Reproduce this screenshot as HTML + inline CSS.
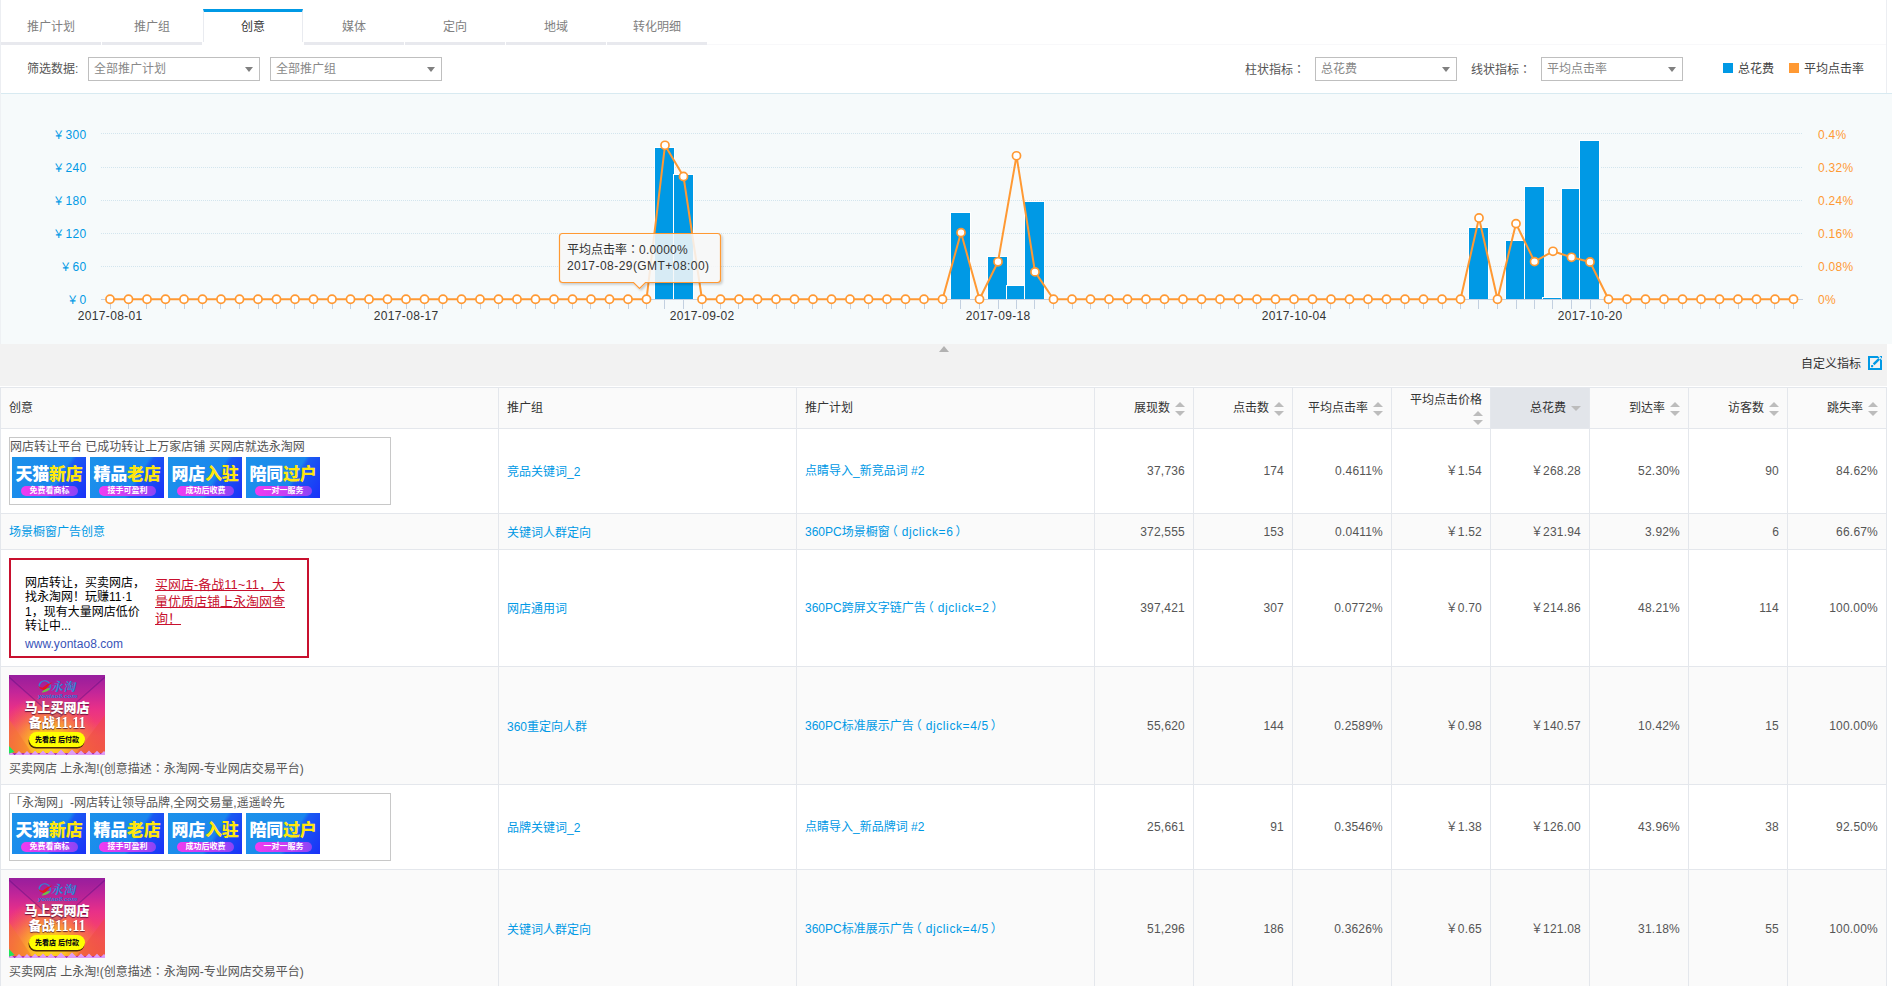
<!DOCTYPE html>
<html lang="zh-CN"><head><meta charset="utf-8"><title>创意报表</title>
<style>
*{box-sizing:border-box;margin:0;padding:0}
html,body{width:1892px;height:986px;overflow:hidden;background:#fff}
body{position:relative;font:12px/16px "Liberation Sans","Noto Sans CJK SC",sans-serif;color:#333}
.abs{position:absolute}
.t{position:absolute;white-space:nowrap;line-height:16px;height:16px}
a{color:#0099e5;text-decoration:none}
/* tabs */
.tab{position:absolute;top:9px;width:100px;height:36px;border-bottom:3px solid #e8e9ee;text-align:center;color:#808080;line-height:16px;padding-top:10px}
.tab.on{border-bottom:0;border-top:3px solid #0099e5;border-left:1px solid #e9ebf0;border-right:1px solid #e9ebf0;color:#333;padding-top:7px;height:33px}
.jp{font-family:"Noto Sans CJK JP",sans-serif}
.sel{position:absolute;top:57px;height:24px;border:1px solid #bfbfbf;background:#fff;color:#888;line-height:16px;padding:3px 0 0 5px}
.sel i{position:absolute;right:6px;top:9px;width:0;height:0;border-left:4px solid transparent;border-right:4px solid transparent;border-top:5px solid #808080}
</style></head><body>

<div class="abs" style="left:0;top:0;width:1px;height:94px;background:#eceef2"></div>
<div class="abs" style="left:1886px;top:0;width:1px;height:94px;background:#eceef2"></div>
<div class="abs" style="left:707px;top:44px;width:1179px;height:1px;background:#f8f8fa"></div>
<div class="tab" style="left:1px">推广计划</div>
<div class="tab" style="left:102px">推广组</div>
<div class="tab on" style="left:203px">创意</div>
<div class="tab" style="left:304px">媒体</div>
<div class="tab" style="left:405px">定向</div>
<div class="tab" style="left:506px">地域</div>
<div class="tab" style="left:607px">转化明细</div>
<div class="t" style="left:27px;top:61px;color:#555">筛选数据:</div>
<div class="sel" style="left:88px;width:172px">全部推广计划<i></i></div>
<div class="sel" style="left:270px;width:172px">全部推广组<i></i></div>
<div class="t" style="left:1245px;top:61px;color:#555">柱状指标<span class="jp" lang="ja">：</span></div>
<div class="sel" style="left:1315px;width:142px">总花费<i></i></div>
<div class="t" style="left:1471px;top:61px;color:#555">线状指标<span class="jp" lang="ja">：</span></div>
<div class="sel" style="left:1541px;width:142px">平均点击率<i></i></div>
<div class="abs" style="left:1723px;top:63px;width:10px;height:10px;background:#0099e5"></div>
<div class="t" style="left:1738px;top:61px;color:#444">总花费</div>
<div class="abs" style="left:1789px;top:63px;width:10px;height:10px;background:#ff9933"></div>
<div class="t" style="left:1804px;top:61px;color:#444">平均点击率</div>
<svg class="abs" style="left:0;top:93px" width="1892" height="251" viewBox="0 0 1892 251" font-family='"Liberation Sans","Noto Sans CJK SC",sans-serif' font-size="12">
<rect x="0" y="0" width="1892" height="251" fill="#f6fafb"/>
<rect x="0" y="0" width="1892" height="1" fill="#d8eaf1"/>
<rect x="0" y="0" width="1" height="251" fill="#eef1f4"/>
<line x1="101" x2="1803" y1="40.5" y2="40.5" stroke="#d3e5ee" stroke-width="1" stroke-dasharray="1,1" shape-rendering="crispEdges"/>
<line x1="101" x2="1803" y1="74.5" y2="74.5" stroke="#d3e5ee" stroke-width="1" stroke-dasharray="1,1" shape-rendering="crispEdges"/>
<line x1="101" x2="1803" y1="107.5" y2="107.5" stroke="#d3e5ee" stroke-width="1" stroke-dasharray="1,1" shape-rendering="crispEdges"/>
<line x1="101" x2="1803" y1="140.5" y2="140.5" stroke="#d3e5ee" stroke-width="1" stroke-dasharray="1,1" shape-rendering="crispEdges"/>
<line x1="101" x2="1803" y1="173.5" y2="173.5" stroke="#d3e5ee" stroke-width="1" stroke-dasharray="1,1" shape-rendering="crispEdges"/>
<rect x="101" y="206" width="1702" height="1" fill="#c3d0e0"/>
<path d="M110.5 206v10M128.5 206v10M146.5 206v10M165.5 206v10M184.5 206v10M202.5 206v10M220.5 206v10M239.5 206v10M258.5 206v10M276.5 206v10M294.5 206v10M313.5 206v10M332.5 206v10M350.5 206v10M368.5 206v10M387.5 206v10M406.5 206v10M424.5 206v10M442.5 206v10M461.5 206v10M480.5 206v10M498.5 206v10M516.5 206v10M535.5 206v10M554.5 206v10M572.5 206v10M590.5 206v10M609.5 206v10M628.5 206v10M646.5 206v10M664.5 206v10M683.5 206v10M702.5 206v10M720.5 206v10M738.5 206v10M757.5 206v10M776.5 206v10M794.5 206v10M812.5 206v10M831.5 206v10M850.5 206v10M868.5 206v10M886.5 206v10M905.5 206v10M924.5 206v10M942.5 206v10M960.5 206v10M979.5 206v10M998.5 206v10M1016.5 206v10M1034.5 206v10M1053.5 206v10M1072.5 206v10M1090.5 206v10M1108.5 206v10M1127.5 206v10M1146.5 206v10M1164.5 206v10M1182.5 206v10M1201.5 206v10M1220.5 206v10M1238.5 206v10M1256.5 206v10M1275.5 206v10M1294.5 206v10M1312.5 206v10M1330.5 206v10M1349.5 206v10M1368.5 206v10M1386.5 206v10M1404.5 206v10M1423.5 206v10M1442.5 206v10M1460.5 206v10M1478.5 206v10M1497.5 206v10M1516.5 206v10M1534.5 206v10M1552.5 206v10M1571.5 206v10M1590.5 206v10M1608.5 206v10M1626.5 206v10M1645.5 206v10M1664.5 206v10M1682.5 206v10M1700.5 206v10M1719.5 206v10M1738.5 206v10M1756.5 206v10M1774.5 206v10M1793.5 206v10" stroke="#c3d0e0" stroke-width="1" fill="none" shape-rendering="crispEdges"/>
<text x="64.4" y="46.2" text-anchor="end" fill="#0099e5" font-size="11.3">￥</text><text x="86.5" y="46.2" text-anchor="end" fill="#0099e5" letter-spacing="0.35">300</text>
<text x="64.4" y="79.2" text-anchor="end" fill="#0099e5" font-size="11.3">￥</text><text x="86.5" y="79.2" text-anchor="end" fill="#0099e5" letter-spacing="0.35">240</text>
<text x="64.4" y="112.2" text-anchor="end" fill="#0099e5" font-size="11.3">￥</text><text x="86.5" y="112.2" text-anchor="end" fill="#0099e5" letter-spacing="0.35">180</text>
<text x="64.4" y="145.2" text-anchor="end" fill="#0099e5" font-size="11.3">￥</text><text x="86.5" y="145.2" text-anchor="end" fill="#0099e5" letter-spacing="0.35">120</text>
<text x="71.3" y="178.2" text-anchor="end" fill="#0099e5" font-size="11.3">￥</text><text x="86.5" y="178.2" text-anchor="end" fill="#0099e5" letter-spacing="0.35">60</text>
<text x="78.2" y="211.2" text-anchor="end" fill="#0099e5" font-size="11.3">￥</text><text x="86.5" y="211.2" text-anchor="end" fill="#0099e5" letter-spacing="0.35">0</text>
<text x="1818" y="46.2" fill="#ff9933" letter-spacing="0.3">0.4%</text>
<text x="1818" y="79.2" fill="#ff9933" letter-spacing="0.3">0.32%</text>
<text x="1818" y="112.2" fill="#ff9933" letter-spacing="0.3">0.24%</text>
<text x="1818" y="145.2" fill="#ff9933" letter-spacing="0.3">0.16%</text>
<text x="1818" y="178.2" fill="#ff9933" letter-spacing="0.3">0.08%</text>
<text x="1818" y="211.2" fill="#ff9933" letter-spacing="0.3">0%</text>
<text x="110.2" y="227" text-anchor="middle" fill="#333" letter-spacing="0.35">2017-08-01</text>
<text x="406.2" y="227" text-anchor="middle" fill="#333" letter-spacing="0.35">2017-08-17</text>
<text x="702.2" y="227" text-anchor="middle" fill="#333" letter-spacing="0.35">2017-09-02</text>
<text x="998.2" y="227" text-anchor="middle" fill="#333" letter-spacing="0.35">2017-09-18</text>
<text x="1294.2" y="227" text-anchor="middle" fill="#333" letter-spacing="0.35">2017-10-04</text>
<text x="1590.2" y="227" text-anchor="middle" fill="#333" letter-spacing="0.35">2017-10-20</text>
<rect x="654" y="54" width="21" height="152" fill="#fff" shape-rendering="crispEdges"/>
<rect x="655" y="55" width="19" height="151" fill="#0099e5" shape-rendering="crispEdges"/>
<rect x="673" y="81" width="21" height="125" fill="#fff" shape-rendering="crispEdges"/>
<rect x="674" y="82" width="19" height="124" fill="#0099e5" shape-rendering="crispEdges"/>
<rect x="950" y="119" width="21" height="87" fill="#fff" shape-rendering="crispEdges"/>
<rect x="951" y="120" width="19" height="86" fill="#0099e5" shape-rendering="crispEdges"/>
<rect x="987" y="163" width="21" height="43" fill="#fff" shape-rendering="crispEdges"/>
<rect x="988" y="164" width="19" height="42" fill="#0099e5" shape-rendering="crispEdges"/>
<rect x="1006" y="192" width="21" height="14" fill="#fff" shape-rendering="crispEdges"/>
<rect x="1007" y="193" width="19" height="13" fill="#0099e5" shape-rendering="crispEdges"/>
<rect x="1024" y="108" width="21" height="98" fill="#fff" shape-rendering="crispEdges"/>
<rect x="1025" y="109" width="19" height="97" fill="#0099e5" shape-rendering="crispEdges"/>
<rect x="1468" y="134" width="21" height="72" fill="#fff" shape-rendering="crispEdges"/>
<rect x="1469" y="135" width="19" height="71" fill="#0099e5" shape-rendering="crispEdges"/>
<rect x="1505" y="147" width="21" height="59" fill="#fff" shape-rendering="crispEdges"/>
<rect x="1506" y="148" width="19" height="58" fill="#0099e5" shape-rendering="crispEdges"/>
<rect x="1524" y="93" width="21" height="113" fill="#fff" shape-rendering="crispEdges"/>
<rect x="1525" y="94" width="19" height="112" fill="#0099e5" shape-rendering="crispEdges"/>
<rect x="1542" y="204" width="21" height="2" fill="#fff" shape-rendering="crispEdges"/>
<rect x="1543" y="205" width="19" height="1" fill="#0099e5" shape-rendering="crispEdges"/>
<rect x="1561" y="95" width="21" height="111" fill="#fff" shape-rendering="crispEdges"/>
<rect x="1562" y="96" width="19" height="110" fill="#0099e5" shape-rendering="crispEdges"/>
<rect x="1579" y="47" width="21" height="159" fill="#fff" shape-rendering="crispEdges"/>
<rect x="1580" y="48" width="19" height="158" fill="#0099e5" shape-rendering="crispEdges"/>
<polyline points="110.0,206.25 128.5,206.25 147.0,206.25 165.5,206.25 184.0,206.25 202.5,206.25 221.0,206.25 239.5,206.25 258.0,206.25 276.5,206.25 295.0,206.25 313.5,206.25 332.0,206.25 350.5,206.25 369.0,206.25 387.5,206.25 406.0,206.25 424.5,206.25 443.0,206.25 461.5,206.25 480.0,206.25 498.5,206.25 517.0,206.25 535.5,206.25 554.0,206.25 572.5,206.25 591.0,206.25 609.5,206.25 628.0,206.25 646.5,206.25 665.0,52.30 683.5,83.50 702.0,206.25 720.5,206.25 739.0,206.25 757.5,206.25 776.0,206.25 794.5,206.25 813.0,206.25 831.5,206.25 850.0,206.25 868.5,206.25 887.0,206.25 905.5,206.25 924.0,206.25 942.5,206.25 961.0,139.60 979.5,206.25 998.0,168.80 1016.5,62.80 1035.0,178.90 1053.5,206.25 1072.0,206.25 1090.5,206.25 1109.0,206.25 1127.5,206.25 1146.0,206.25 1164.5,206.25 1183.0,206.25 1201.5,206.25 1220.0,206.25 1238.5,206.25 1257.0,206.25 1275.5,206.25 1294.0,206.25 1312.5,206.25 1331.0,206.25 1349.5,206.25 1368.0,206.25 1386.5,206.25 1405.0,206.25 1423.5,206.25 1442.0,206.25 1460.5,206.25 1479.0,125.00 1497.5,206.25 1516.0,130.60 1534.5,168.60 1553.0,158.30 1571.5,164.30 1590.0,169.00 1608.5,206.25 1627.0,206.25 1645.5,206.25 1664.0,206.25 1682.5,206.25 1701.0,206.25 1719.5,206.25 1738.0,206.25 1756.5,206.25 1775.0,206.25 1793.5,206.25" fill="none" stroke="#ff9933" stroke-width="2" stroke-linejoin="round"/>
<circle cx="110.0" cy="206.25" r="4.05" fill="#fff" stroke="#ff9933" stroke-width="1.7"/>
<circle cx="128.5" cy="206.25" r="4.05" fill="#fff" stroke="#ff9933" stroke-width="1.7"/>
<circle cx="147.0" cy="206.25" r="4.05" fill="#fff" stroke="#ff9933" stroke-width="1.7"/>
<circle cx="165.5" cy="206.25" r="4.05" fill="#fff" stroke="#ff9933" stroke-width="1.7"/>
<circle cx="184.0" cy="206.25" r="4.05" fill="#fff" stroke="#ff9933" stroke-width="1.7"/>
<circle cx="202.5" cy="206.25" r="4.05" fill="#fff" stroke="#ff9933" stroke-width="1.7"/>
<circle cx="221.0" cy="206.25" r="4.05" fill="#fff" stroke="#ff9933" stroke-width="1.7"/>
<circle cx="239.5" cy="206.25" r="4.05" fill="#fff" stroke="#ff9933" stroke-width="1.7"/>
<circle cx="258.0" cy="206.25" r="4.05" fill="#fff" stroke="#ff9933" stroke-width="1.7"/>
<circle cx="276.5" cy="206.25" r="4.05" fill="#fff" stroke="#ff9933" stroke-width="1.7"/>
<circle cx="295.0" cy="206.25" r="4.05" fill="#fff" stroke="#ff9933" stroke-width="1.7"/>
<circle cx="313.5" cy="206.25" r="4.05" fill="#fff" stroke="#ff9933" stroke-width="1.7"/>
<circle cx="332.0" cy="206.25" r="4.05" fill="#fff" stroke="#ff9933" stroke-width="1.7"/>
<circle cx="350.5" cy="206.25" r="4.05" fill="#fff" stroke="#ff9933" stroke-width="1.7"/>
<circle cx="369.0" cy="206.25" r="4.05" fill="#fff" stroke="#ff9933" stroke-width="1.7"/>
<circle cx="387.5" cy="206.25" r="4.05" fill="#fff" stroke="#ff9933" stroke-width="1.7"/>
<circle cx="406.0" cy="206.25" r="4.05" fill="#fff" stroke="#ff9933" stroke-width="1.7"/>
<circle cx="424.5" cy="206.25" r="4.05" fill="#fff" stroke="#ff9933" stroke-width="1.7"/>
<circle cx="443.0" cy="206.25" r="4.05" fill="#fff" stroke="#ff9933" stroke-width="1.7"/>
<circle cx="461.5" cy="206.25" r="4.05" fill="#fff" stroke="#ff9933" stroke-width="1.7"/>
<circle cx="480.0" cy="206.25" r="4.05" fill="#fff" stroke="#ff9933" stroke-width="1.7"/>
<circle cx="498.5" cy="206.25" r="4.05" fill="#fff" stroke="#ff9933" stroke-width="1.7"/>
<circle cx="517.0" cy="206.25" r="4.05" fill="#fff" stroke="#ff9933" stroke-width="1.7"/>
<circle cx="535.5" cy="206.25" r="4.05" fill="#fff" stroke="#ff9933" stroke-width="1.7"/>
<circle cx="554.0" cy="206.25" r="4.05" fill="#fff" stroke="#ff9933" stroke-width="1.7"/>
<circle cx="572.5" cy="206.25" r="4.05" fill="#fff" stroke="#ff9933" stroke-width="1.7"/>
<circle cx="591.0" cy="206.25" r="4.05" fill="#fff" stroke="#ff9933" stroke-width="1.7"/>
<circle cx="609.5" cy="206.25" r="4.05" fill="#fff" stroke="#ff9933" stroke-width="1.7"/>
<circle cx="628.0" cy="206.25" r="4.05" fill="#fff" stroke="#ff9933" stroke-width="1.7"/>
<circle cx="646.5" cy="206.25" r="4.05" fill="#fff" stroke="#ff9933" stroke-width="1.7"/>
<circle cx="665.0" cy="52.30" r="4.05" fill="#fff" stroke="#ff9933" stroke-width="1.7"/>
<circle cx="683.5" cy="83.50" r="4.05" fill="#fff" stroke="#ff9933" stroke-width="1.7"/>
<circle cx="702.0" cy="206.25" r="4.05" fill="#fff" stroke="#ff9933" stroke-width="1.7"/>
<circle cx="720.5" cy="206.25" r="4.05" fill="#fff" stroke="#ff9933" stroke-width="1.7"/>
<circle cx="739.0" cy="206.25" r="4.05" fill="#fff" stroke="#ff9933" stroke-width="1.7"/>
<circle cx="757.5" cy="206.25" r="4.05" fill="#fff" stroke="#ff9933" stroke-width="1.7"/>
<circle cx="776.0" cy="206.25" r="4.05" fill="#fff" stroke="#ff9933" stroke-width="1.7"/>
<circle cx="794.5" cy="206.25" r="4.05" fill="#fff" stroke="#ff9933" stroke-width="1.7"/>
<circle cx="813.0" cy="206.25" r="4.05" fill="#fff" stroke="#ff9933" stroke-width="1.7"/>
<circle cx="831.5" cy="206.25" r="4.05" fill="#fff" stroke="#ff9933" stroke-width="1.7"/>
<circle cx="850.0" cy="206.25" r="4.05" fill="#fff" stroke="#ff9933" stroke-width="1.7"/>
<circle cx="868.5" cy="206.25" r="4.05" fill="#fff" stroke="#ff9933" stroke-width="1.7"/>
<circle cx="887.0" cy="206.25" r="4.05" fill="#fff" stroke="#ff9933" stroke-width="1.7"/>
<circle cx="905.5" cy="206.25" r="4.05" fill="#fff" stroke="#ff9933" stroke-width="1.7"/>
<circle cx="924.0" cy="206.25" r="4.05" fill="#fff" stroke="#ff9933" stroke-width="1.7"/>
<circle cx="942.5" cy="206.25" r="4.05" fill="#fff" stroke="#ff9933" stroke-width="1.7"/>
<circle cx="961.0" cy="139.60" r="4.05" fill="#fff" stroke="#ff9933" stroke-width="1.7"/>
<circle cx="979.5" cy="206.25" r="4.05" fill="#fff" stroke="#ff9933" stroke-width="1.7"/>
<circle cx="998.0" cy="168.80" r="4.05" fill="#fff" stroke="#ff9933" stroke-width="1.7"/>
<circle cx="1016.5" cy="62.80" r="4.05" fill="#fff" stroke="#ff9933" stroke-width="1.7"/>
<circle cx="1035.0" cy="178.90" r="4.05" fill="#fff" stroke="#ff9933" stroke-width="1.7"/>
<circle cx="1053.5" cy="206.25" r="4.05" fill="#fff" stroke="#ff9933" stroke-width="1.7"/>
<circle cx="1072.0" cy="206.25" r="4.05" fill="#fff" stroke="#ff9933" stroke-width="1.7"/>
<circle cx="1090.5" cy="206.25" r="4.05" fill="#fff" stroke="#ff9933" stroke-width="1.7"/>
<circle cx="1109.0" cy="206.25" r="4.05" fill="#fff" stroke="#ff9933" stroke-width="1.7"/>
<circle cx="1127.5" cy="206.25" r="4.05" fill="#fff" stroke="#ff9933" stroke-width="1.7"/>
<circle cx="1146.0" cy="206.25" r="4.05" fill="#fff" stroke="#ff9933" stroke-width="1.7"/>
<circle cx="1164.5" cy="206.25" r="4.05" fill="#fff" stroke="#ff9933" stroke-width="1.7"/>
<circle cx="1183.0" cy="206.25" r="4.05" fill="#fff" stroke="#ff9933" stroke-width="1.7"/>
<circle cx="1201.5" cy="206.25" r="4.05" fill="#fff" stroke="#ff9933" stroke-width="1.7"/>
<circle cx="1220.0" cy="206.25" r="4.05" fill="#fff" stroke="#ff9933" stroke-width="1.7"/>
<circle cx="1238.5" cy="206.25" r="4.05" fill="#fff" stroke="#ff9933" stroke-width="1.7"/>
<circle cx="1257.0" cy="206.25" r="4.05" fill="#fff" stroke="#ff9933" stroke-width="1.7"/>
<circle cx="1275.5" cy="206.25" r="4.05" fill="#fff" stroke="#ff9933" stroke-width="1.7"/>
<circle cx="1294.0" cy="206.25" r="4.05" fill="#fff" stroke="#ff9933" stroke-width="1.7"/>
<circle cx="1312.5" cy="206.25" r="4.05" fill="#fff" stroke="#ff9933" stroke-width="1.7"/>
<circle cx="1331.0" cy="206.25" r="4.05" fill="#fff" stroke="#ff9933" stroke-width="1.7"/>
<circle cx="1349.5" cy="206.25" r="4.05" fill="#fff" stroke="#ff9933" stroke-width="1.7"/>
<circle cx="1368.0" cy="206.25" r="4.05" fill="#fff" stroke="#ff9933" stroke-width="1.7"/>
<circle cx="1386.5" cy="206.25" r="4.05" fill="#fff" stroke="#ff9933" stroke-width="1.7"/>
<circle cx="1405.0" cy="206.25" r="4.05" fill="#fff" stroke="#ff9933" stroke-width="1.7"/>
<circle cx="1423.5" cy="206.25" r="4.05" fill="#fff" stroke="#ff9933" stroke-width="1.7"/>
<circle cx="1442.0" cy="206.25" r="4.05" fill="#fff" stroke="#ff9933" stroke-width="1.7"/>
<circle cx="1460.5" cy="206.25" r="4.05" fill="#fff" stroke="#ff9933" stroke-width="1.7"/>
<circle cx="1479.0" cy="125.00" r="4.05" fill="#fff" stroke="#ff9933" stroke-width="1.7"/>
<circle cx="1497.5" cy="206.25" r="4.05" fill="#fff" stroke="#ff9933" stroke-width="1.7"/>
<circle cx="1516.0" cy="130.60" r="4.05" fill="#fff" stroke="#ff9933" stroke-width="1.7"/>
<circle cx="1534.5" cy="168.60" r="4.05" fill="#fff" stroke="#ff9933" stroke-width="1.7"/>
<circle cx="1553.0" cy="158.30" r="4.05" fill="#fff" stroke="#ff9933" stroke-width="1.7"/>
<circle cx="1571.5" cy="164.30" r="4.05" fill="#fff" stroke="#ff9933" stroke-width="1.7"/>
<circle cx="1590.0" cy="169.00" r="4.05" fill="#fff" stroke="#ff9933" stroke-width="1.7"/>
<circle cx="1608.5" cy="206.25" r="4.05" fill="#fff" stroke="#ff9933" stroke-width="1.7"/>
<circle cx="1627.0" cy="206.25" r="4.05" fill="#fff" stroke="#ff9933" stroke-width="1.7"/>
<circle cx="1645.5" cy="206.25" r="4.05" fill="#fff" stroke="#ff9933" stroke-width="1.7"/>
<circle cx="1664.0" cy="206.25" r="4.05" fill="#fff" stroke="#ff9933" stroke-width="1.7"/>
<circle cx="1682.5" cy="206.25" r="4.05" fill="#fff" stroke="#ff9933" stroke-width="1.7"/>
<circle cx="1701.0" cy="206.25" r="4.05" fill="#fff" stroke="#ff9933" stroke-width="1.7"/>
<circle cx="1719.5" cy="206.25" r="4.05" fill="#fff" stroke="#ff9933" stroke-width="1.7"/>
<circle cx="1738.0" cy="206.25" r="4.05" fill="#fff" stroke="#ff9933" stroke-width="1.7"/>
<circle cx="1756.5" cy="206.25" r="4.05" fill="#fff" stroke="#ff9933" stroke-width="1.7"/>
<circle cx="1775.0" cy="206.25" r="4.05" fill="#fff" stroke="#ff9933" stroke-width="1.7"/>
<circle cx="1793.5" cy="206.25" r="4.05" fill="#fff" stroke="#ff9933" stroke-width="1.7"/>
<defs><filter id="sh" x="-10%" y="-10%" width="130%" height="140%"><feDropShadow dx="1.5" dy="1.5" stdDeviation="1.2" flood-color="#000" flood-opacity=".22"/></filter></defs>
<path d="M562.5 140.5h155a3 3 0 0 1 3 3v43a3 3 0 0 1 -3 3h-72l-6 6l-6 -6h-71a3 3 0 0 1 -3 -3v-43a3 3 0 0 1 3 -3z" fill="rgba(252,252,252,.84)" stroke="#ff9933" stroke-width="1.2" filter="url(#sh)"/>
<text x="567" y="160.5" fill="#333">平均点击率<tspan lang="ja" font-family='"Noto Sans CJK JP",sans-serif'>：</tspan><tspan letter-spacing="0.2">0.0000%</tspan></text>
<text x="567" y="177.2" fill="#333" letter-spacing="0.45">2017-08-29(GMT+08:00)</text>
</svg>
<div class="abs" style="left:0;top:344px;width:1887px;height:42px;background:#f2f2f2"></div>
<div class="abs" style="left:939px;top:346px;width:0;height:0;border-left:5px solid transparent;border-right:5px solid transparent;border-bottom:6px solid #b2b2b2"></div>
<div class="t" style="left:1801px;top:356px;color:#333">自定义指标</div>
<svg class="abs" style="left:1868px;top:356px" width="14" height="14" viewBox="0 0 14 14"><rect x="1" y="1" width="12" height="12" fill="none" stroke="#0099e5" stroke-width="2"/><path d="M9.6 -1L15 4.4" stroke="#f2f2f2" stroke-width="1.3"/><path d="M5.6 8.4L11.2 2.9" stroke="#0099e5" stroke-width="2.4"/><rect x="3" y="9" width="2.2" height="2.2" rx=".4" fill="#0099e5"/></svg>
<style>
.hl{position:absolute;left:0;width:1887px;height:1px;background:#e4e7ec}
.vl{position:absolute;top:387px;width:1px;height:599px;background:#e4e7ec}
.rb{position:absolute;left:1px;width:1885px}
.lnk{position:absolute;white-space:nowrap;line-height:16px;height:16px;color:#0099e5}
.num{position:absolute;white-space:nowrap;line-height:16px;height:16px;text-align:right;width:90px;color:#555;letter-spacing:.2px}
.pl{position:relative;left:-4px}.pr{position:relative;left:2px}
.hd{position:absolute;white-space:nowrap;line-height:16px;height:16px;color:#333}
.au{position:absolute;width:0;height:0;border-left:5px solid transparent;border-right:5px solid transparent;border-bottom:5px solid #bcbcbc}
.ad{position:absolute;width:0;height:0;border-left:5px solid transparent;border-right:5px solid transparent;border-top:5px solid #bcbcbc}
.box{position:absolute;left:9px;width:382px;height:68px;border:1px solid #c8c8c8;background:#fff}
.box .tt{position:absolute;left:0;top:1px;line-height:16px;color:#555;white-space:nowrap}
.bn{position:absolute;top:19px;width:74px;height:41px;overflow:hidden;background:linear-gradient(122deg,#1c92ea 0%,#1a86ee 60%,#1a5af2 65%,#1a30f8 100%)}
.bn b{position:absolute;left:0;top:8px;width:74px;text-align:center;font:900 17px/20px "Liberation Sans","Noto Sans CJK SC",sans-serif;color:#fff;letter-spacing:-.3px;white-space:nowrap}
.bn b em{font-style:normal;color:#ffe70f}
.bn span{position:absolute;left:9px;top:29px;width:57px;height:10px;border-radius:5px;background:linear-gradient(90deg,#f03cf0,#c040f4 60%,#8a44f6);color:#fff;font:700 8px/10px "Liberation Sans","Noto Sans CJK SC",sans-serif;text-align:center;white-space:nowrap}
.ad2{position:absolute;width:96px;height:80px;left:9px;overflow:hidden;background:linear-gradient(180deg,#9c1fa0 0%,#c42698 22%,#e83088 42%,#f23c74 58%,#f65a58 76%,#f4683c 100%)}
</style>
<div class="rb" style="top:388px;height:40px;background:#fafafa"></div>
<div class="abs" style="left:1490px;top:388px;width:99px;height:40px;background:#e2e5ea"></div>
<div class="rb" style="top:429px;height:84px;background:#fff"></div>
<div class="rb" style="top:514px;height:35px;background:#fafafa"></div>
<div class="rb" style="top:550px;height:116px;background:#fff"></div>
<div class="rb" style="top:667px;height:117px;background:#fafafa"></div>
<div class="rb" style="top:785px;height:84px;background:#fff"></div>
<div class="rb" style="top:870px;height:116px;background:#fafafa"></div>
<div class="hl" style="top:387px"></div>
<div class="hl" style="top:428px"></div>
<div class="hl" style="top:513px"></div>
<div class="hl" style="top:549px"></div>
<div class="hl" style="top:666px"></div>
<div class="hl" style="top:784px"></div>
<div class="hl" style="top:869px"></div>
<div class="abs" style="left:0;top:386px;width:1887px;height:1px;background:#fff"></div>
<div class="vl" style="left:0px"></div>
<div class="vl" style="left:498px"></div>
<div class="vl" style="left:796px"></div>
<div class="vl" style="left:1094px"></div>
<div class="vl" style="left:1193px"></div>
<div class="vl" style="left:1292px"></div>
<div class="vl" style="left:1391px"></div>
<div class="vl" style="left:1490px"></div>
<div class="vl" style="left:1589px"></div>
<div class="vl" style="left:1688px"></div>
<div class="vl" style="left:1787px"></div>
<div class="vl" style="left:1886px"></div>
<div class="hd" style="left:9px;top:400px">创意</div>
<div class="hd" style="left:507px;top:400px">推广组</div>
<div class="hd" style="left:805px;top:400px">推广计划</div>
<div class="hd" style="left:1134px;top:400px">展现数</div>
<div class="au" style="left:1175px;top:402px"></div><div class="ad" style="left:1175px;top:411px"></div>
<div class="hd" style="left:1233px;top:400px">点击数</div>
<div class="au" style="left:1274px;top:402px"></div><div class="ad" style="left:1274px;top:411px"></div>
<div class="hd" style="left:1308px;top:400px">平均点击率</div>
<div class="au" style="left:1373px;top:402px"></div><div class="ad" style="left:1373px;top:411px"></div>
<div class="hd" style="left:1410px;top:392px">平均点击价格</div>
<div class="au" style="left:1473px;top:411px"></div><div class="ad" style="left:1473px;top:420px"></div>
<div class="hd" style="left:1530px;top:400px">总花费</div>
<div class="ad" style="left:1571px;top:406px"></div>
<div class="hd" style="left:1629px;top:400px">到达率</div>
<div class="au" style="left:1670px;top:402px"></div><div class="ad" style="left:1670px;top:411px"></div>
<div class="hd" style="left:1728px;top:400px">访客数</div>
<div class="au" style="left:1769px;top:402px"></div><div class="ad" style="left:1769px;top:411px"></div>
<div class="hd" style="left:1827px;top:400px">跳失率</div>
<div class="au" style="left:1868px;top:402px"></div><div class="ad" style="left:1868px;top:411px"></div>
<a class="lnk" style="left:507px;top:464px">竞品关键词_2</a>
<a class="lnk" style="left:805px;top:463px">点睛导入_新竞品词 #2</a>
<div class="num" style="left:1095px;top:463px">37,736</div>
<div class="num" style="left:1194px;top:463px">174</div>
<div class="num" style="left:1293px;top:463px">0.4611%</div>
<div class="num" style="left:1392px;top:463px">￥1.54</div>
<div class="num" style="left:1491px;top:463px">￥268.28</div>
<div class="num" style="left:1590px;top:463px">52.30%</div>
<div class="num" style="left:1689px;top:463px">90</div>
<div class="num" style="left:1788px;top:463px">84.62%</div>
<a class="lnk" style="left:507px;top:525px">关键词人群定向</a>
<a class="lnk" style="left:805px;top:524px">360PC场景橱窗<span class="pl">（</span><span style="letter-spacing:.6px">djclick=6</span><span class="pr">）</span></a>
<div class="num" style="left:1095px;top:524px">372,555</div>
<div class="num" style="left:1194px;top:524px">153</div>
<div class="num" style="left:1293px;top:524px">0.0411%</div>
<div class="num" style="left:1392px;top:524px">￥1.52</div>
<div class="num" style="left:1491px;top:524px">￥231.94</div>
<div class="num" style="left:1590px;top:524px">3.92%</div>
<div class="num" style="left:1689px;top:524px">6</div>
<div class="num" style="left:1788px;top:524px">66.67%</div>
<a class="lnk" style="left:507px;top:601px">网店通用词</a>
<a class="lnk" style="left:805px;top:600px">360PC跨屏文字链广告<span class="pl">（</span><span style="letter-spacing:.6px">djclick=2</span><span class="pr">）</span></a>
<div class="num" style="left:1095px;top:600px">397,421</div>
<div class="num" style="left:1194px;top:600px">307</div>
<div class="num" style="left:1293px;top:600px">0.0772%</div>
<div class="num" style="left:1392px;top:600px">￥0.70</div>
<div class="num" style="left:1491px;top:600px">￥214.86</div>
<div class="num" style="left:1590px;top:600px">48.21%</div>
<div class="num" style="left:1689px;top:600px">114</div>
<div class="num" style="left:1788px;top:600px">100.00%</div>
<a class="lnk" style="left:507px;top:719px">360重定向人群</a>
<a class="lnk" style="left:805px;top:718px">360PC标准展示广告<span class="pl">（</span><span style="letter-spacing:.6px">djclick=4/5</span><span class="pr">）</span></a>
<div class="num" style="left:1095px;top:718px">55,620</div>
<div class="num" style="left:1194px;top:718px">144</div>
<div class="num" style="left:1293px;top:718px">0.2589%</div>
<div class="num" style="left:1392px;top:718px">￥0.98</div>
<div class="num" style="left:1491px;top:718px">￥140.57</div>
<div class="num" style="left:1590px;top:718px">10.42%</div>
<div class="num" style="left:1689px;top:718px">15</div>
<div class="num" style="left:1788px;top:718px">100.00%</div>
<a class="lnk" style="left:507px;top:820px">品牌关键词_2</a>
<a class="lnk" style="left:805px;top:819px">点睛导入_新品牌词 #2</a>
<div class="num" style="left:1095px;top:819px">25,661</div>
<div class="num" style="left:1194px;top:819px">91</div>
<div class="num" style="left:1293px;top:819px">0.3546%</div>
<div class="num" style="left:1392px;top:819px">￥1.38</div>
<div class="num" style="left:1491px;top:819px">￥126.00</div>
<div class="num" style="left:1590px;top:819px">43.96%</div>
<div class="num" style="left:1689px;top:819px">38</div>
<div class="num" style="left:1788px;top:819px">92.50%</div>
<a class="lnk" style="left:507px;top:922px">关键词人群定向</a>
<a class="lnk" style="left:805px;top:921px">360PC标准展示广告<span class="pl">（</span><span style="letter-spacing:.6px">djclick=4/5</span><span class="pr">）</span></a>
<div class="num" style="left:1095px;top:921px">51,296</div>
<div class="num" style="left:1194px;top:921px">186</div>
<div class="num" style="left:1293px;top:921px">0.3626%</div>
<div class="num" style="left:1392px;top:921px">￥0.65</div>
<div class="num" style="left:1491px;top:921px">￥121.08</div>
<div class="num" style="left:1590px;top:921px">31.18%</div>
<div class="num" style="left:1689px;top:921px">55</div>
<div class="num" style="left:1788px;top:921px">100.00%</div>
<div class="box" style="top:437px"><div class="tt">网店转让平台 已成功转让上万家店铺 买网店就选永淘网</div><div class="bn" style="left:2px"><b>天猫<em>新店</em></b><span>免费看商标</span></div><div class="bn" style="left:80px"><b>精品<em>老店</em></b><span>接手可盈利</span></div><div class="bn" style="left:158px"><b>网店<em>入驻</em></b><span>成功后收费</span></div><div class="bn" style="left:236px"><b>陪同<em>过户</em></b><span>一对一服务</span></div></div>
<div class="box" style="top:793px"><div class="tt">「永淘网」-网店转让领导品牌,全网交易量,遥遥岭先</div><div class="bn" style="left:2px"><b>天猫<em>新店</em></b><span>免费看商标</span></div><div class="bn" style="left:80px"><b>精品<em>老店</em></b><span>接手可盈利</span></div><div class="bn" style="left:158px"><b>网店<em>入驻</em></b><span>成功后收费</span></div><div class="bn" style="left:236px"><b>陪同<em>过户</em></b><span>一对一服务</span></div></div>
<a class="lnk" style="left:9px;top:524px">场景橱窗广告创意</a>
<div class="abs" style="left:9px;top:558px;width:300px;height:100px;border:2px solid #c8102e;background:#fff">
<div class="abs" style="left:14px;top:16px;width:130px;font-size:12px;line-height:14.3px;color:#000;white-space:nowrap">网店转让，买卖网店，<br>找永淘网！玩赚11·1<br>1，现有大量网店低价<br>转让中...</div>
<div class="abs" style="left:14px;top:77px;line-height:14px;color:#3853b8;letter-spacing:.05px">www.yontao8.com</div>
<a class="abs" style="left:144px;top:16px;width:134px;font-size:13px;line-height:17px;color:#c8102e;text-decoration:underline">买网店-备战11~11，大量优质店铺上永淘网查询！</a>
</div>
<div class="ad2" style="top:675px"><svg class="abs" style="left:0;top:0" width="96" height="80" viewBox="0 0 96 80"><defs><radialGradient id="yg1" cx="40" cy="70" r="52" gradientUnits="userSpaceOnUse"><stop offset="0" stop-color="#ffdc1c" stop-opacity="1"/><stop offset=".32" stop-color="#fdc222" stop-opacity=".95"/><stop offset=".68" stop-color="#f98c36" stop-opacity=".5"/><stop offset="1" stop-color="#f86a40" stop-opacity="0"/></radialGradient></defs><rect x="0" y="10" width="96" height="70" fill="url(#yg1)"/><path d="M0 0L96 0L52 40Q48 43 44 40Z" fill="#8a1a98" fill-opacity=".22"/><path d="M0 2L44 41Q48 44 52 41L96 2" fill="none" stroke="#5a1080" stroke-opacity=".45" stroke-width="1.4"/><path d="M0 44L24 80L0 80Z" fill="#f27430" fill-opacity=".45"/><path d="M96 40L66 80L96 80Z" fill="#ee4a44" fill-opacity=".5"/><rect x="0" y="78.2" width="96" height="1.8" fill="#a020c0"/><path d="M-1.4 80L2 76.8L5.4 80ZM5.9 80L10 76.0L14.1 80ZM13.9 80L18 76.0L22.1 80ZM21.7 80L26 75.8L30.3 80ZM29.5 80L34 75.6L38.5 80ZM37.4 80L42 75.4L46.6 80ZM46.5 80L52 74.4L57.5 80ZM57.5 80L63 74.4L68.5 80ZM67.4 80L72 75.4L76.6 80ZM75.5 80L80 75.6L84.5 80ZM83.7 80L88 75.8L92.3 80ZM90.9 80L95 76.0L99.1 80Z" fill="#de9cf6"/><path d="M0 71L5.5 77L0 78.5Z" fill="#1ee65a"/><path d="M30.2 12.5a5.6 5.6 0 1 1 9.5 2.8" fill="none" stroke="#2a8cd8" stroke-width="1.2"/><path d="M28.6 10.4q3.2 2.4 5 2.3q4.5 -4.2 10 -5.4q-4.6 3 -7.6 8q-4.4 -.6 -7.4 -4.9z" fill="#e8141e"/><path d="M32.6 17.4q3 -4 8.6 -4.6q-2.4 5 -8.6 4.6z" fill="#6cc04a"/></svg><div class="abs" style="left:43px;top:3px;font:700 12px/16px 'Noto Serif CJK SC',serif;color:#2a8ad8;letter-spacing:.5px;white-space:nowrap;transform:skewX(-10deg)">永淘</div><div class="abs" style="left:29px;top:17px;font:italic 700 6.2px/8px 'Liberation Sans',sans-serif;color:#2a78d8;white-space:nowrap;letter-spacing:.1px">yontao8.com</div><div class="abs" style="left:0;top:25px;width:96px;text-align:center;font:900 13px/16px 'Liberation Sans','Noto Sans CJK SC',sans-serif;color:#fff;white-space:nowrap;text-shadow:0 1px 1px rgba(60,0,40,.75)">马上买网店</div><div class="abs" style="left:0;top:39px;width:96px;text-align:center;font:900 13px/16px 'Liberation Serif','Noto Sans CJK SC',sans-serif;color:#fff;white-space:nowrap;text-shadow:0 1px 1px rgba(60,0,40,.75)">备战<span style="display:inline-block;font-size:17.5px;line-height:16px;transform:scaleX(.82);transform-origin:0 50%;margin-right:-7px;vertical-align:-1px">11.11</span></div><div class="abs" style="left:20px;top:57px;width:56px;height:15px;border-radius:8px;background:#ffff00;box-shadow:-.5px 1.5px 0 #4a2a08;text-align:center;font:900 7px/15px 'Liberation Sans','Noto Sans CJK SC',sans-serif;color:#111;white-space:nowrap">先看店 后付款</div></div>
<div class="t" style="left:9px;top:760px;color:#555">买卖网店 上永淘!(创意描述<span class="jp" lang="ja">：</span>永淘网-专业网店交易平台)</div>
<div class="ad2" style="top:878px"><svg class="abs" style="left:0;top:0" width="96" height="80" viewBox="0 0 96 80"><defs><radialGradient id="yg2" cx="40" cy="70" r="52" gradientUnits="userSpaceOnUse"><stop offset="0" stop-color="#ffdc1c" stop-opacity="1"/><stop offset=".32" stop-color="#fdc222" stop-opacity=".95"/><stop offset=".68" stop-color="#f98c36" stop-opacity=".5"/><stop offset="1" stop-color="#f86a40" stop-opacity="0"/></radialGradient></defs><rect x="0" y="10" width="96" height="70" fill="url(#yg2)"/><path d="M0 0L96 0L52 40Q48 43 44 40Z" fill="#8a1a98" fill-opacity=".22"/><path d="M0 2L44 41Q48 44 52 41L96 2" fill="none" stroke="#5a1080" stroke-opacity=".45" stroke-width="1.4"/><path d="M0 44L24 80L0 80Z" fill="#f27430" fill-opacity=".45"/><path d="M96 40L66 80L96 80Z" fill="#ee4a44" fill-opacity=".5"/><rect x="0" y="78.2" width="96" height="1.8" fill="#a020c0"/><path d="M-1.4 80L2 76.8L5.4 80ZM5.9 80L10 76.0L14.1 80ZM13.9 80L18 76.0L22.1 80ZM21.7 80L26 75.8L30.3 80ZM29.5 80L34 75.6L38.5 80ZM37.4 80L42 75.4L46.6 80ZM46.5 80L52 74.4L57.5 80ZM57.5 80L63 74.4L68.5 80ZM67.4 80L72 75.4L76.6 80ZM75.5 80L80 75.6L84.5 80ZM83.7 80L88 75.8L92.3 80ZM90.9 80L95 76.0L99.1 80Z" fill="#de9cf6"/><path d="M0 71L5.5 77L0 78.5Z" fill="#1ee65a"/><path d="M30.2 12.5a5.6 5.6 0 1 1 9.5 2.8" fill="none" stroke="#2a8cd8" stroke-width="1.2"/><path d="M28.6 10.4q3.2 2.4 5 2.3q4.5 -4.2 10 -5.4q-4.6 3 -7.6 8q-4.4 -.6 -7.4 -4.9z" fill="#e8141e"/><path d="M32.6 17.4q3 -4 8.6 -4.6q-2.4 5 -8.6 4.6z" fill="#6cc04a"/></svg><div class="abs" style="left:43px;top:3px;font:700 12px/16px 'Noto Serif CJK SC',serif;color:#2a8ad8;letter-spacing:.5px;white-space:nowrap;transform:skewX(-10deg)">永淘</div><div class="abs" style="left:29px;top:17px;font:italic 700 6.2px/8px 'Liberation Sans',sans-serif;color:#2a78d8;white-space:nowrap;letter-spacing:.1px">yontao8.com</div><div class="abs" style="left:0;top:25px;width:96px;text-align:center;font:900 13px/16px 'Liberation Sans','Noto Sans CJK SC',sans-serif;color:#fff;white-space:nowrap;text-shadow:0 1px 1px rgba(60,0,40,.75)">马上买网店</div><div class="abs" style="left:0;top:39px;width:96px;text-align:center;font:900 13px/16px 'Liberation Serif','Noto Sans CJK SC',sans-serif;color:#fff;white-space:nowrap;text-shadow:0 1px 1px rgba(60,0,40,.75)">备战<span style="display:inline-block;font-size:17.5px;line-height:16px;transform:scaleX(.82);transform-origin:0 50%;margin-right:-7px;vertical-align:-1px">11.11</span></div><div class="abs" style="left:20px;top:57px;width:56px;height:15px;border-radius:8px;background:#ffff00;box-shadow:-.5px 1.5px 0 #4a2a08;text-align:center;font:900 7px/15px 'Liberation Sans','Noto Sans CJK SC',sans-serif;color:#111;white-space:nowrap">先看店 后付款</div></div>
<div class="t" style="left:9px;top:963px;color:#555">买卖网店 上永淘!(创意描述<span class="jp" lang="ja">：</span>永淘网-专业网店交易平台)</div>
</body></html>
